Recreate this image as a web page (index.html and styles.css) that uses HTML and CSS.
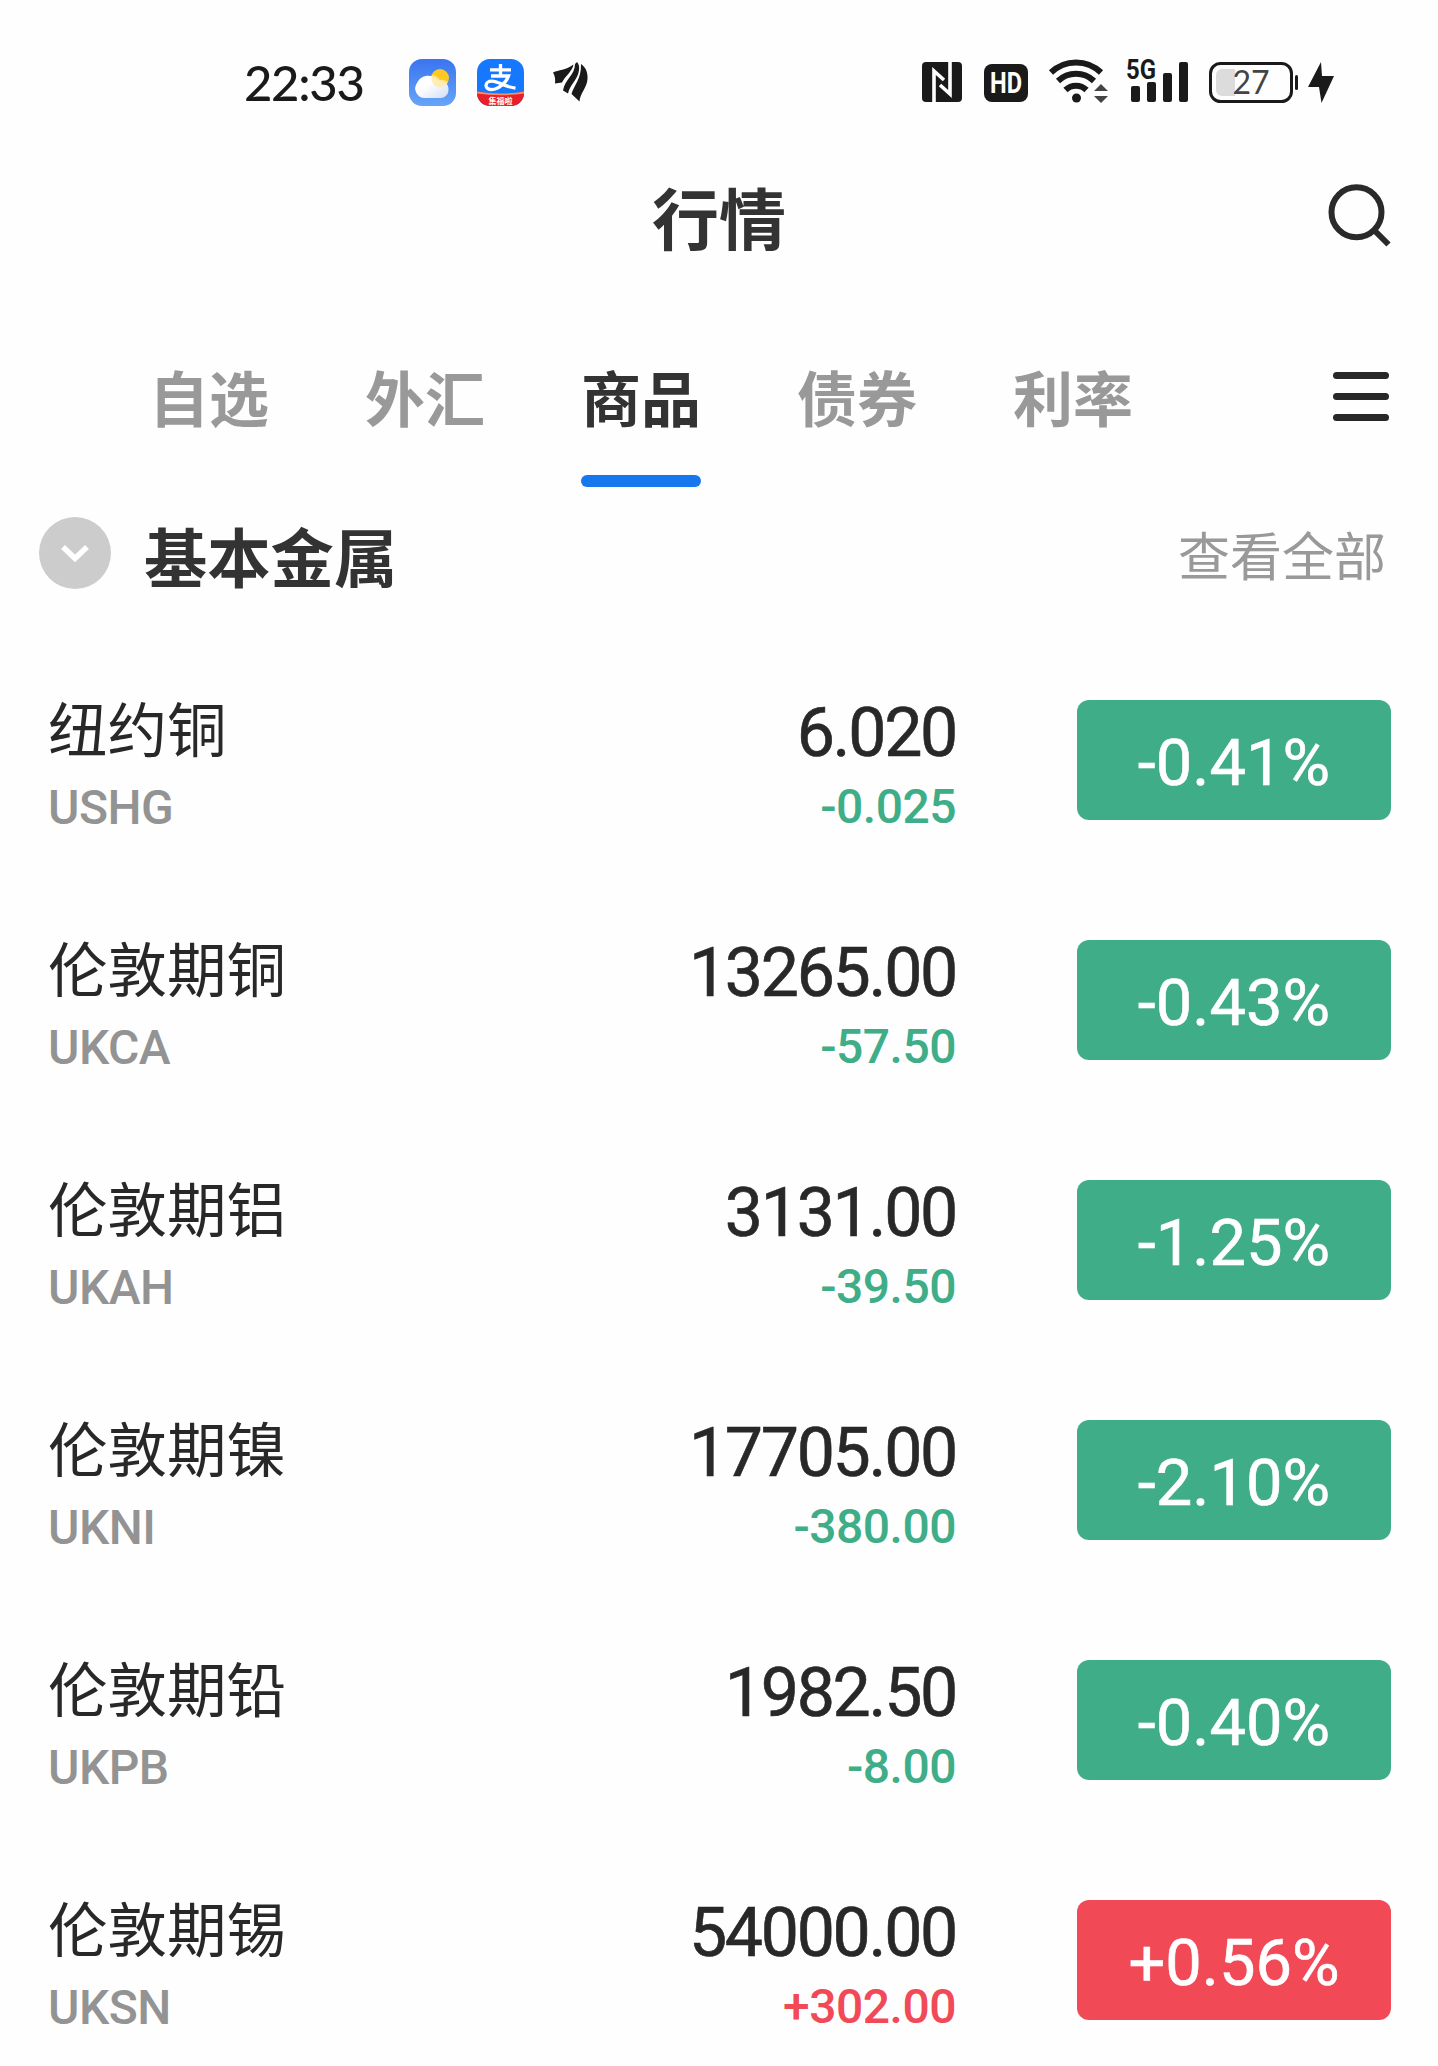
FILE: index.html
```html
<!DOCTYPE html>
<html lang="zh-CN">
  <head>
    <meta charset="UTF-8" />
    <meta name="viewport" content="width=device-width, initial-scale=1.0" />
    <title>行情</title>
    <link rel="stylesheet" href="styles.css">
  </head>
  <body>
    <div class="status-bar">
      <span class="time">22:33</span>
      <div class="status-left">
        <svg class="weather" width="47" height="47" viewBox="0 0 47 47">
          <defs>
            <linearGradient id="sky" x1="0" y1="0" x2="0" y2="1">
              <stop offset="0" stop-color="#3a74f0" />
              <stop offset="1" stop-color="#66a5f8" />
            </linearGradient>
            <linearGradient id="cloud" x1="0" y1="0" x2="1" y2="1">
              <stop offset="0.4" stop-color="#fff" />
              <stop offset="1" stop-color="#cfdcf8" />
            </linearGradient>
          </defs>
          <rect width="47" height="47" rx="13" fill="url(#sky)" />
          <circle cx="31" cy="19" r="9" fill="#ffc921" />
          <path d="M16 39a9.500 9.500 0 0 1-8-15A12.300 12.300 0 0 1 29 21.500a9 9 0 0 1 10.500 9A8 8 0 0 1 32 39z" fill="url(#cloud)" />
          <path d="M22.500 20.500a8.700 8.700 0 0 0 16.500 2.800c-2.500-2.300-5-3-8-2.300-2-3.500-4.500-5-8.200-5z" fill="#ffe9a0" opacity="0.75" />
        </svg>
        <svg class="alipay" width="47" height="47" viewBox="0 0 47 47">
          <defs>
            <clipPath id="app"><rect width="47" height="47" rx="13" /></clipPath>
          </defs>
          <g clip-path="url(#app)">
            <rect width="47" height="47" fill="#1677ff" />
            <path d="M0 33Q23.500 37 47 33V47H0z" fill="#e8202c" />
            <path d="M0 32.500Q23.500 36.500 47 32.500V34.500Q23.500 38 0 34.500z" fill="#ff8a5c" />
          </g>
          <path d="M13 10.800h21M23.500 5v11.500M14 17h17.500C29 24 21 31 14 30.500c-7-.500-6.500-8.500 1-8.300 6 .3 14 5.800 23.500 7" fill="none" stroke="#fff" stroke-width="3.300" />
          <text x="23.500" y="44.500" text-anchor="middle" class="alipay-tag">集福啦</text>
        </svg>
        <svg class="leaf" width="36" height="40" viewBox="0 0 36 40" fill="#1a1a1a">
          <path d="M0 10.500C6 7.500 12 9 20.500 2.500 19 10 12 14 9 20.500L2 21.500C2.500 17 2 14 0 10.500z" />
          <path d="M22 2L24 0C26 2 26.500 5 26 8 25 18 17 22 15 31.500L10 28.500C12 17 22 13 22 2z" />
          <path d="M28 2C32.500 5 35 10 34.500 17 34 26 27 31 26.500 39.500L18.500 32C21 23 28.500 17 28 2z" />
        </svg>
      </div>
      <div class="status-right">
        <svg class="nfc" width="40" height="40" viewBox="0 0 40 40">
          <rect width="40" height="40" rx="4" fill="#1a1a1a" />
          <path d="M12 40V9L22 18M28 0V32L18 23" fill="none" stroke="#fff" stroke-width="3.600" />
        </svg>
        <svg class="hd" width="44" height="38" viewBox="0 0 44 38">
          <rect width="44" height="38" rx="8" fill="#1a1a1a" />
          <text x="22" y="29" text-anchor="middle" textLength="32" lengthAdjust="spacingAndGlyphs" class="hd-text">HD</text>
        </svg>
        <svg class="wifi" width="60" height="45" viewBox="0 0 60 45">
          <g fill="none" stroke="#1a1a1a" stroke-width="6">
            <path d="M2 14.500a36 36 0 0 1 50 0" />
            <path d="M9 23a26 26 0 0 1 36 0" />
            <path d="M16.500 32a15 15 0 0 1 21 0" />
          </g>
          <circle cx="27.500" cy="40" r="4.500" fill="#1a1a1a" />
          <path d="M52 26l7 7H45zM52 45l7-7H45z" fill="#444" />
        </svg>
        <svg class="signal" width="62" height="45" viewBox="0 0 62 45" fill="#1a1a1a">
          <text x="0" y="20.500" textLength="30" lengthAdjust="spacingAndGlyphs" class="signal-text">5G</text>
          <rect x="5" y="28" width="9" height="16" rx="2" />
          <rect x="21" y="24" width="9" height="20" rx="2" />
          <rect x="37" y="15" width="9" height="29" rx="2" />
          <rect x="53" y="4" width="9" height="40" rx="2" />
        </svg>
        <svg class="battery" width="90" height="41" viewBox="0 0 90 41">
          <rect x="1.500" y="1.500" width="81" height="38" rx="10" fill="none" stroke="#1a1a1a" stroke-width="3" />
          <path d="M13 7H26V34H13a6 6 0 0 1-6-6V13a6 6 0 0 1 6-6z" fill="#dcdcdc" />
          <rect x="86" y="13" width="3" height="15" rx="1.500" fill="#1a1a1a" />
          <text x="42" y="32" text-anchor="middle" class="battery-text">27</text>
        </svg>
        <svg class="bolt" width="26" height="41" viewBox="0 0 26 41">
          <path d="M13 0L0 25H11L13.500 41 26 14H14z" fill="#1a1a1a" />
        </svg>
      </div>
    </div>

    <div class="header">
      <h1>行情</h1>
      <svg class="search" width="64" height="64" viewBox="0 0 64 64" fill="none" stroke="#2a2a2a" stroke-width="6">
        <circle cx="29.500" cy="28.300" r="25" />
        <path d="M47 46L61.500 60.500" />
      </svg>
    </div>

    <div class="tabs">
      <span class="tab">自选</span>
      <span class="tab">外汇</span>
      <span class="tab active">商品</span>
      <span class="tab">债券</span>
      <span class="tab">利率</span>
      <div class="menu"><i></i><i></i><i></i></div>
    </div>

    <div class="group">
      <svg width="72" height="72" viewBox="0 0 72 72">
        <circle cx="36" cy="36" r="36" fill="#ccc" />
        <path d="M24 30L36 41.500 48 30" fill="none" stroke="#fff" stroke-width="5.500" />
      </svg>
      <h2>基本金属</h2>
      <span class="more">查看全部</span>
    </div>

    <div class="list">
      <div class="row">
        <div class="name"><b>纽约铜</b><span>USHG</span></div>
        <div class="price"><b>6.020</b><span class="down">-0.025</span></div>
        <div class="badge">-0.41%</div>
      </div>
      <div class="row">
        <div class="name"><b>伦敦期铜</b><span>UKCA</span></div>
        <div class="price"><b>13265.00</b><span class="down">-57.50</span></div>
        <div class="badge">-0.43%</div>
      </div>
      <div class="row">
        <div class="name"><b>伦敦期铝</b><span>UKAH</span></div>
        <div class="price"><b>3131.00</b><span class="down">-39.50</span></div>
        <div class="badge">-1.25%</div>
      </div>
      <div class="row">
        <div class="name"><b>伦敦期镍</b><span>UKNI</span></div>
        <div class="price"><b>17705.00</b><span class="down">-380.00</span></div>
        <div class="badge">-2.10%</div>
      </div>
      <div class="row">
        <div class="name"><b>伦敦期铅</b><span>UKPB</span></div>
        <div class="price"><b>1982.50</b><span class="down">-8.00</span></div>
        <div class="badge">-0.40%</div>
      </div>
      <div class="row">
        <div class="name"><b>伦敦期锡</b><span>UKSN</span></div>
        <div class="price"><b>54000.00</b><span class="up">+302.00</span></div>
        <div class="badge badge-up">+0.56%</div>
      </div>
    </div>
  </body>
</html>
```
FILE: styles.css
```css
* {
  box-sizing: border-box;
}
body {
  margin: 0;
  height: 2066px;
  overflow: hidden;
  background-color: #fefefe;
  color: #282828;
  font-family: "Noto Sans CJK SC", sans-serif;
}
svg {
  display: block;
  flex: none;
  overflow: visible;
}
h1,
h2 {
  margin: 0;
  color: #333;
}

/* status bar */
.status-bar {
  display: flex;
  align-items: center;
  height: 164px;
  padding: 0 104px 0 244px;
}
.time {
  width: 165px;
  font-family: Lato, sans-serif;
  font-size: 49px;
  font-weight: 500;
  line-height: 60px;
  letter-spacing: -1.3px;
  color: #1a1a1a;
}
.status-left {
  display: flex;
  align-items: center;
}
.alipay {
  margin-left: 21px;
}
.leaf {
  margin-left: 29px;
}
.alipay-tag {
  font-size: 8px;
  font-weight: bold;
  fill: #fff;
}
.status-right {
  display: flex;
  align-items: center;
  margin-left: auto;
}
.hd {
  margin: 2px 0 0 22px;
}
.wifi {
  margin: -4px 0 0 21px;
}
.signal {
  margin: -4px 0 0 17px;
}
.battery {
  margin: 1px 0 0 21px;
}
.bolt {
  margin-left: 9px;
}
.hd-text {
  font: bold 29px Roboto, sans-serif;
  fill: #fff;
}
.signal-text {
  font: bold 28px Roboto, sans-serif;
}
.battery-text {
  font: 32px Lato, sans-serif;
  fill: #444;
}

/* title */
.header {
  position: relative;
  display: flex;
  align-items: center;
  justify-content: center;
  height: 112px;
}
.header h1 {
  padding-bottom: 8px;
  font-size: 67px;
  line-height: 96px;
}
.search {
  position: absolute;
  right: 47px;
  top: 20px;
}

/* tabs */
.tabs {
  display: flex;
  gap: 96px;
  height: 211px;
  padding: 0 49px 0 149px;
}
.tab {
  padding-top: 75px;
  font-size: 60px;
  line-height: 90px;
  font-weight: bold;
  color: #999;
}
.tab.active {
  color: #333;
}
.tab.active::after {
  content: "";
  display: block;
  height: 12px;
  margin-top: 34px;
  border-radius: 6px;
  background-color: #1677ee;
}
.menu {
  display: flex;
  flex-direction: column;
  gap: 14px;
  width: 56px;
  margin-left: auto;
  padding-top: 96px;
}
.menu i {
  height: 7px;
  border-radius: 4px;
  background-color: #282828;
}

/* group title */
.group {
  display: flex;
  align-items: center;
  height: 132px;
  padding: 0 52px 0 39px;
}
.group h2 {
  padding-top: 3px;
  margin-left: 33px;
  font-size: 63.3px;
  line-height: 90px;
}
.more {
  margin-left: auto;
  padding-top: 2px;
  font-size: 52px;
  line-height: 80px;
  color: #999;
}

/* quotes */
.list {
  padding-top: 21px;
}
.row {
  display: flex;
  height: 240px;
  padding: 0 47px 0 48px;
}
.row b,
.row span {
  display: block;
}
.name {
  width: 400px;
  padding-top: 46px;
}
.name b {
  font-size: 59.5px;
  font-weight: normal;
  line-height: 80px;
}
.name span {
  margin-top: 12px;
  font: 500 48px/60px Roboto, sans-serif;
  letter-spacing: -0.5px;
  color: #939393;
}
.price {
  flex: 1;
  padding: 53px 121px 0 0;
  text-align: right;
  font-family: Roboto, sans-serif;
}
.price b {
  font-size: 68px;
  font-weight: 400;
  -webkit-text-stroke: 0.6px currentColor;
  line-height: 80px;
  letter-spacing: -2.300px;
}
.price span {
  margin-top: 4px;
  font-size: 48px;
  font-weight: 500;
  line-height: 60px;
  letter-spacing: -0.5px;
}
.down {
  color: #3fad87;
}
.up {
  color: #f24957;
}
.badge {
  width: 314px;
  height: 120px;
  margin-top: 60px;
  padding-top: 3px;
  border-radius: 12px;
  background-color: #3fad87;
  color: #fff;
  font: 400 65px/120px Roboto, sans-serif;
  -webkit-text-stroke: 0.6px currentColor;
  text-align: center;
}
.badge-up {
  background-color: #f24957;
}
```
